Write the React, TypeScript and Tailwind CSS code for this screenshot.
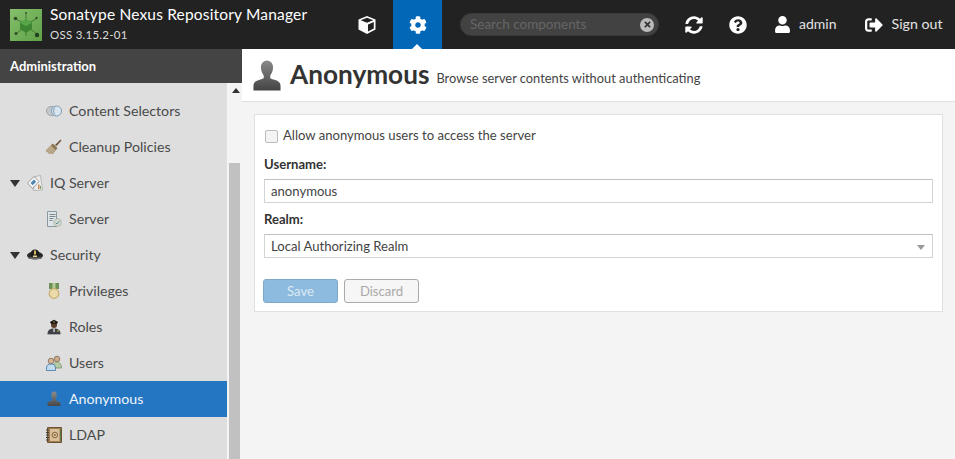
import { FaCog, FaSyncAlt, FaQuestionCircle, FaUser, FaSignOutAlt, FaTimes } from "react-icons/fa";
import type { ReactNode } from "react";

function Row({ label, depth, icon, open, active }: { label: string; depth: 1 | 2; icon: ReactNode; open?: boolean; active?: boolean }) {
  return (
    <div className={`flex h-9 items-center ${depth === 2 ? "pl-[46px]" : "pl-[10px]"} ${active ? "bg-[#2476c3] text-[#eef5fb]" : "text-[#4a4a4a]"}`}>
      {open && <span className="mr-[7px] h-0 w-0 border-x-[5px] border-t-[7px] border-x-transparent border-t-[#333]" />}
      <span className="flex h-4 w-4 items-center justify-center">{icon}</span>
      <span className="ml-[7px]">{label}</span>
    </div>
  );
}

const selectorsIcon = (
  <svg width="16" height="16" viewBox="0 0 16 16"><rect x="0.500" y="3.500" width="11" height="9" rx="4.500" fill="#c4c8cb" stroke="#a3a7aa" /><circle cx="10.500" cy="8" r="5" fill="#dbe7f0" stroke="#7f9cb3" /><path d="M9 4.500a5 5 0 0 0 0 7" stroke="#7f9cb3" fill="none" /></svg>
);
const broomIcon = (
  <svg width="16" height="16" viewBox="0 0 16 16"><path d="M0.500 11 6 5.500l4.500 4.500-4 5-2.500-1-1 .8-.6-2-1.900.2z" fill="#bba888" stroke="#94825f" strokeWidth=".5" /><path d="m5 6.500 2-2 4.500 4.500-2 2z" fill="#8b7552" /><path d="M9 6 14.500.5l1 1L10.500 7z" fill="#6b5338" /></svg>
);
const iqIcon = (
  <svg width="16" height="16" viewBox="0 0 16 16"><path d="M8 1.500 13.500.5l2 14.500-9 .5z" fill="#ececec" stroke="#a3a3a3" strokeWidth=".7" /><path d="M.500 8 7 1.500l5 5-6.500 7z" fill="#f6f6f6" stroke="#7c7c7c" strokeWidth=".7" /><path d="m3.500 8 3.500-3.500 2.200 2.200-3.500 3.500z" fill="#4b86b4" /><path d="M11 9.500h1.500V14H11z" fill="#c98b4c" /><path d="M13 11h1v3h-1z" fill="#7a9c5a" /></svg>
);
const serverIcon = (
  <svg width="16" height="16" viewBox="0 0 16 16"><path d="M1.500.500h9v15h-9z" fill="#dfe5e9" stroke="#8a98a2" /><path d="M3.500 3.500h6M3.500 5.500h6M3.500 7.500h4M3.500 9.500h3" stroke="#78868f" /><circle cx="11.500" cy="11.500" r="3.800" fill="#d5dbd0" stroke="#9aa596" strokeWidth=".6" /><path d="m9.500 11.500 1.500 1.500 2.500-3" stroke="#5f8f9e" fill="none" /></svg>
);
const capIcon = (
  <svg width="16" height="16" viewBox="0 0 16 16"><ellipse cx="8" cy="8.500" rx="8" ry="4" fill="#2a2a2a" /><path d="M3.500 7a4.500 4.500 0 0 1 9 0v2h-9z" fill="#1c1c1c" /><path d="M7 3.500h2v4H7z" fill="#d6b65f" /><path d="M1.500 10.500h13v1.500h-13z" fill="#6e6e6e" /><path d="M6 8.500h4V10H6z" fill="#e9d48a" /></svg>
);
const medalIcon = (
  <svg width="16" height="16" viewBox="0 0 16 16"><path d="M3 0h10v6H3z" fill="#6f9157" /><path d="M6.500 0h3v6h-3z" fill="#b4cb9b" /><circle cx="8" cy="10.500" r="4.800" fill="#eadcaa" stroke="#c9ad70" strokeWidth="1.200" /></svg>
);
const officerIcon = (
  <svg width="16" height="16" viewBox="0 0 16 16"><path d="M1.500 15c0-4 2.500-5.500 6.500-5.500s6.500 1.500 6.500 5.500z" fill="#3e4146" /><circle cx="8" cy="6" r="3" fill="#5b3e2a" /><path d="M4 3 8 .8 12 3l-1 1.800H5z" fill="#111" /><path d="M7.600 2h.8v2h-.8z" fill="#d8b850" /><path d="M7.400 9.500h1.200v3.500H7.400z" fill="#eee" /><path d="M11 11.500h1.800v1H11z" fill="#e6c14b" /><path d="M1.500 15h13v.8h-13z" fill="#9a9a9a" /></svg>
);
const usersIcon = (
  <svg width="16" height="16" viewBox="0 0 16 16"><circle cx="11" cy="4" r="2.800" fill="#cfac8a" stroke="#6e5a47" strokeWidth=".7" /><path d="M7.500 13c0-4 1-6 3.500-6s4.500 2 4.500 6z" fill="#b6cba5" stroke="#6f8a5f" strokeWidth=".7" /><circle cx="5" cy="6" r="2.800" fill="#d8b694" stroke="#6e5a47" strokeWidth=".7" /><path d="M.500 15.500v-2.500c0-3 2-4 4.500-4s4.500 1 4.500 4v2.500z" fill="#c3dbee" stroke="#3f76a6" strokeWidth=".8" /></svg>
);
const anonymousIcon = (
  <svg width="16" height="16" viewBox="0 0 16 16">
    <defs><linearGradient id="anonSmall" x1="0" y1="0" x2="0" y2="1"><stop offset="0" stopColor="#8c8c8c" /><stop offset="1" stopColor="#474747" /></linearGradient></defs>
    <path d="M5.300 4a2.700 3.500 0 0 1 5.400 0c0 2-.7 3-1 4v1.500c2 .8 4.800 1 4.800 3.500v2H1.500v-2c0-2.500 2.800-2.700 4.800-3.500V8c-.3-1-1-2-1-4z" fill="url(#anonSmall)" />
  </svg>
);
const bookIcon = (
  <svg width="16" height="16" viewBox="0 0 16 16"><path d="M1.500.500h14v15h-14z" fill="#a07c50" stroke="#6f5434" /><path d="M4 2h9.500v12H4z" fill="#d8c09a" /><circle cx="8.800" cy="8" r="2.800" fill="none" stroke="#86673f" /><circle cx="8.800" cy="8" r="1" fill="#86673f" /><path d="M0 3h3M0 5.500h3M0 8h3M0 10.500h3M0 13h3" stroke="#3c3c3c" /><path d="M14.500 2v12" stroke="#5a7a46" /></svg>
);

export default function App() {
  return (
    <div className="flex h-[459px] w-[955px] flex-col overflow-hidden bg-[#f4f4f4] font-['Lato','Open_Sans',sans-serif] text-[13.100px] text-[#444]">
      <header className="flex h-[49px] shrink-0 items-center bg-[#222] text-white">
        <div className="ml-[10px] h-8 w-8 bg-[linear-gradient(135deg,#86c06c,#5fa047)]">
          <svg width="32" height="32" viewBox="0 0 32 32">
            <path d="M15 15 6 10M17 15l9-5M15 18l-8 6M17 18l9 6M16 12V5M16 20v7" stroke="#3a6d2f" strokeWidth="0.800" />
            <circle cx="5.500" cy="9.500" r="1.800" fill="#2f4f2a" />
            <circle cx="26.500" cy="9" r="1.200" fill="#2f4f2a" />
            <circle cx="6" cy="24.500" r="1.500" fill="#2f4f2a" />
            <circle cx="27" cy="26" r="2.200" fill="#24401f" />
            <circle cx="16" cy="4" r="1" fill="#2f4f2a" />
            <path d="m16 10.500 6 3.300v6.500l-6 3.500-6-3.500v-6.500z" fill="#3d8533" />
            <path d="m16 10.500 6 3.300-6 3.400-6-3.400z" fill="#57a548" />
          </svg>
        </div>
        <div className="ml-[8px] w-[291px] -translate-y-[1px]">
          <div className="text-[15.500px] leading-[19px] tracking-[0.18px]">Sonatype Nexus Repository Manager</div>
          <div className="mt-[4px] text-[11.500px] leading-[14px] tracking-[0.25px] text-[#ddd]">OSS 3.15.2-01</div>
        </div>
        <div className="flex h-full w-[52px] items-center justify-center">
          <svg width="20" height="20" viewBox="0 0 20 20">
            <path d="M10 1 18.500 4.500V14.500L10 19 1.500 14.500V4.500z" fill="#fff" />
            <path d="M10 2.800 16.300 5.200 10 7.700 3.700 5.200zM11 9.400l5.800-2.300v6.400L11 16.600z" fill="#222" />
          </svg>
        </div>
        <div className="relative flex h-full w-[49px] items-center justify-center bg-[#0367b8]">
          <FaCog size={18} />
          <span className="absolute bottom-0 left-[19px] h-0 w-0 border-x-[5px] border-b-[5px] border-x-transparent border-b-white" />
        </div>
        <div className="ml-[18px] flex h-[23px] w-[199px] items-center rounded-full border border-[#3a3a3a] bg-[#424242] pr-[4px] pl-[9px] text-[13.500px] text-[#666]">
          <span className="flex-1">Search components</span>
          <span className="flex h-[14px] w-[14px] items-center justify-center rounded-full bg-[#bbb]">
            <FaTimes size={9} className="text-[#333]" />
          </span>
        </div>
        <FaSyncAlt size={18} className="ml-[26px]" />
        <FaQuestionCircle size={18} className="ml-[26px]" />
        <FaUser size={17} className="ml-[27px]" />
        <span className="ml-[8px] -translate-y-[1px] text-[14px] text-[#e4e4e4]">admin</span>
        <FaSignOutAlt size={18} className="ml-[28px]" />
        <span className="ml-[9px] -translate-y-[1px] text-[14.200px] text-[#e4e4e4]">Sign out</span>
      </header>

      <div className="flex min-h-0 flex-1">
        <aside className="flex w-[242px] shrink-0 flex-col">
          <div className="flex h-[34px] shrink-0 items-center bg-[#444] pt-[2px] pl-[10px] text-[13px] font-bold text-white">Administration</div>
          <div className="flex min-h-0 flex-1">
            <nav className="w-[227px] bg-[#dedede] pt-[10px] text-[14.200px]">
              <Row depth={2} label="Content Selectors" icon={selectorsIcon} />
              <Row depth={2} label="Cleanup Policies" icon={broomIcon} />
              <Row depth={1} open label="IQ Server" icon={iqIcon} />
              <Row depth={2} label="Server" icon={serverIcon} />
              <Row depth={1} open label="Security" icon={capIcon} />
              <Row depth={2} label="Privileges" icon={medalIcon} />
              <Row depth={2} label="Roles" icon={officerIcon} />
              <Row depth={2} label="Users" icon={usersIcon} />
              <Row depth={2} active label="Anonymous" icon={anonymousIcon} />
              <Row depth={2} label="LDAP" icon={bookIcon} />
            </nav>
            <div className="flex w-[15px] flex-col bg-[#f4f4f4] pl-[2px]">
              <span className="mx-auto mt-[5px] h-0 w-0 border-x-[4px] border-b-[5px] border-x-transparent border-b-[#333]" />
              <div className="mt-[70px] h-full w-[11px] bg-[#c1c1c1]" />
            </div>
          </div>
        </aside>

        <main className="min-w-0 flex-1">
          <div className="flex h-[53px] items-center border-b border-[#e0e0e0] bg-white pl-[11px]">
            <svg width="28" height="33" viewBox="0 0 30 34" className="shrink-0">
              <defs><linearGradient id="anonLarge" x1="0" y1="0" x2="0" y2="1"><stop offset="0" stopColor="#8a8a8a" /><stop offset="1" stopColor="#434343" /></linearGradient></defs>
              <path d="M8.500 8c0-4 3.500-7 6.500-7s6.500 3 6.500 7c0 4-1.500 7-3 9v3c4 2 11 2 11 8v5H.500v-5c0-6 7-6 11-8v-3c-1.500-2-3-5-3-9z" fill="url(#anonLarge)" />
            </svg>
            <h1 className="ml-[9px] text-[26.200px] font-bold text-[#333]">Anonymous</h1>
            <span className="ml-[7px] pt-[8px] text-[12.850px] text-[#444]">Browse server contents without authenticating</span>
          </div>
          <div className="p-3">
            <div className="h-[198px] border border-[#e0e0e0] bg-white px-[9px] pt-[12px]">
              <div className="flex h-[18px] items-center">
                <span className="ml-[1px] h-[13px] w-[13px] rounded-[2px] border border-[#bbb] bg-[#f4f4f4]" />
                <span className="ml-[5px]">Allow anonymous users to access the server</span>
              </div>
              <div className="mt-[10px] leading-[18px] font-bold text-[#333]">Username:</div>
              <div className="mt-[6px] flex h-6 items-center border border-[#d4d4d4] border-t-[#c0c0c0] pt-[1px] pl-[6px]">anonymous</div>
              <div className="mt-[7px] leading-[18px] font-bold text-[#333]">Realm:</div>
              <div className="mt-[6px] flex h-6 items-center justify-between border border-[#d4d4d4] border-t-[#c0c0c0] pt-[2px] pr-[7px] pl-[6px]">
                <span>Local Authorizing Realm</span>
                <span className="h-0 w-0 border-x-[4.500px] border-t-[5px] border-x-transparent border-t-[#999]" />
              </div>
              <div className="mt-[21px] -ml-[1px] flex gap-[6px]">
                <button className="h-6 w-[75px] rounded-[3px] border border-[#7fa9c9] bg-[#8dbbe0] pt-[1px] text-[#dce9f3]">Save</button>
                <button className="h-6 w-[75px] rounded-[3px] border border-[#aaa] bg-[#f6f6f6] pt-[1px] text-[#aaa]">Discard</button>
              </div>
            </div>
          </div>
        </main>
      </div>
    </div>
  );
}
